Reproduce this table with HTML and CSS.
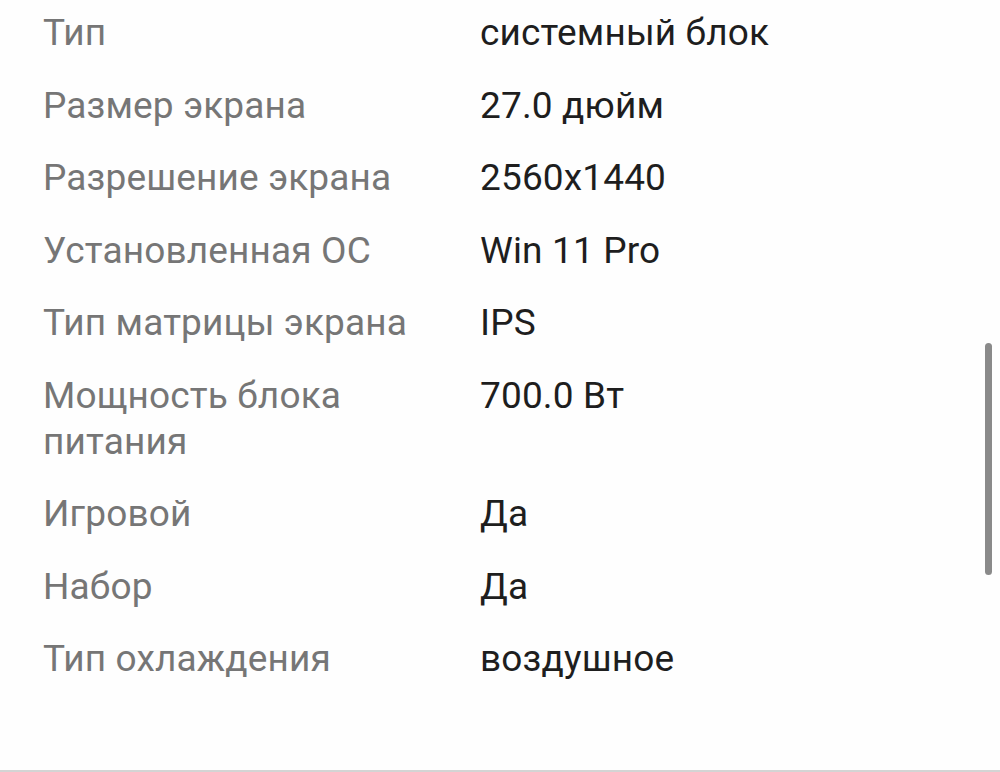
FILE: index.html
```html
<!DOCTYPE html>
<html lang="ru">
<head>
<meta charset="utf-8">
<title>Характеристики</title>
<link rel="stylesheet" href="styles.css">
</head>
<body>
<div class="screen">
  <dl class="specs">
    <div class="row"><dt>Тип</dt><dd>системный блок</dd></div>
    <div class="row"><dt>Размер экрана</dt><dd>27.0 дюйм</dd></div>
    <div class="row"><dt>Разрешение экрана</dt><dd>2560x1440</dd></div>
    <div class="row"><dt>Установленная ОС</dt><dd>Win 11 Pro</dd></div>
    <div class="row"><dt>Тип матрицы экрана</dt><dd>IPS</dd></div>
    <div class="row"><dt>Мощность блока питания</dt><dd>700.0 Вт</dd></div>
    <div class="row"><dt>Игровой</dt><dd>Да</dd></div>
    <div class="row"><dt>Набор</dt><dd>Да</dd></div>
    <div class="row"><dt>Тип охлаждения</dt><dd>воздушное</dd></div>
  </dl>
  <div class="footer"></div>
  <div class="scrollbar"></div>
</div>
</body>
</html>
```
FILE: styles.css
```css
html, body {
  margin: 0;
  padding: 0;
  background: #fefefe;
}
.screen {
  position: relative;
  width: 1000px;
  height: 772px;
  overflow: hidden;
  display: flex;
  flex-direction: column;
  font-family: Roboto, "Noto Sans", sans-serif;
  font-size: 37px;
  line-height: 46px;
  letter-spacing: 0.15px;
}
.specs {
  flex: 1;
  margin: -3px 0 0;
  padding: 0 0 0 43px;
}
.row {
  display: grid;
  grid-template-columns: 400px 1fr;
  column-gap: 37px;
  padding: 13.25px 0;
}
.row dt {
  color: #767676;
  margin: 0;
}
.row dd {
  color: #1e1e1e;
  margin: 0;
}
.footer {
  height: 0;
  border-top: 2px solid #d4d4d4;
}
.scrollbar {
  position: absolute;
  left: 985px;
  top: 343px;
  width: 7px;
  height: 232px;
  border-radius: 4px;
  background: #8a8a8a;
}
```
